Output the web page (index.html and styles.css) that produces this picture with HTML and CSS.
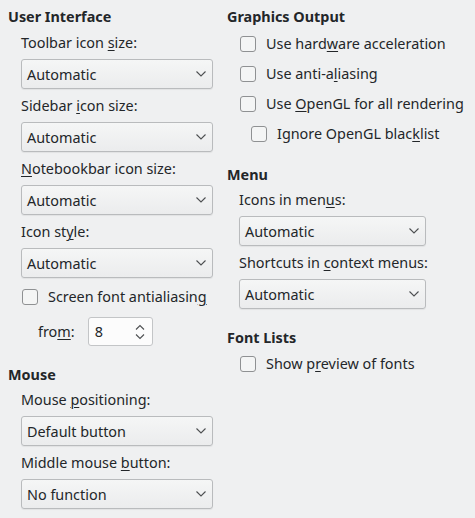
FILE: index.html
```html
<!DOCTYPE html>
<html>
<head>
<meta charset="utf-8">
<link rel="stylesheet" href="styles.css">
</head>
<body>
<div class="page">
  <div class="col col-left">
    <div class="heading">User Interface</div>
    <div class="indent">
      <div class="label">Toolbar icon <u>s</u>ize:</div>
      <div class="combo"><span>Automatic</span><svg class="chev" width="10" height="6" viewBox="0 0 10 6"><path d="M0.5 0.5 L5 5 L9.5 0.5" fill="none" stroke="#4d4f51" stroke-width="1.1"/></svg></div>
      <div class="label">Sidebar <u>i</u>con size:</div>
      <div class="combo"><span>Automatic</span><svg class="chev" width="10" height="6" viewBox="0 0 10 6"><path d="M0.5 0.5 L5 5 L9.5 0.5" fill="none" stroke="#4d4f51" stroke-width="1.1"/></svg></div>
      <div class="label"><u>N</u>otebookbar icon size:</div>
      <div class="combo"><span>Automatic</span><svg class="chev" width="10" height="6" viewBox="0 0 10 6"><path d="M0.5 0.5 L5 5 L9.5 0.5" fill="none" stroke="#4d4f51" stroke-width="1.1"/></svg></div>
      <div class="label">Icon st<u>y</u>le:</div>
      <div class="combo"><span>Automatic</span><svg class="chev" width="10" height="6" viewBox="0 0 10 6"><path d="M0.5 0.5 L5 5 L9.5 0.5" fill="none" stroke="#4d4f51" stroke-width="1.1"/></svg></div>
      <div class="check check-aa"><span class="box"></span><span>Screen font antialiasin<u>g</u></span></div>
      <div class="from-row">
        <span class="from-label">fro<u>m</u>:</span>
        <div class="spin"><span>8</span><svg class="spin-arrows" width="10" height="16" viewBox="0 0 10 16"><path d="M1 5.5 L5 1.5 L9 5.5 M1 10.5 L5 14.5 L9 10.5" fill="none" stroke="#4d4f51" stroke-width="1.1"/></svg></div>
      </div>
    </div>
    <div class="heading heading-mouse">Mouse</div>
    <div class="indent">
      <div class="label label-first">Mouse <u>p</u>ositioning:</div>
      <div class="combo"><span>Default button</span><svg class="chev" width="10" height="6" viewBox="0 0 10 6"><path d="M0.5 0.5 L5 5 L9.5 0.5" fill="none" stroke="#4d4f51" stroke-width="1.1"/></svg></div>
      <div class="label">Middle mouse <u>b</u>utton:</div>
      <div class="combo"><span>No function</span><svg class="chev" width="10" height="6" viewBox="0 0 10 6"><path d="M0.5 0.5 L5 5 L9.5 0.5" fill="none" stroke="#4d4f51" stroke-width="1.1"/></svg></div>
    </div>
  </div>
  <div class="col col-right">
    <div class="heading">Graphics Output</div>
    <div class="indent">
      <div class="check check-first"><span class="box"></span><span>Use hard<u>w</u>are acceleration</span></div>
      <div class="check"><span class="box"></span><span>Use anti-a<u>l</u>iasing</span></div>
      <div class="check"><span class="box"></span><span>Use <u>O</u>penGL for all rendering</span></div>
      <div class="check check-sub"><span class="box"></span><span>Ignore OpenGL blac<u>k</u>list</span></div>
    </div>
    <div class="heading heading-menu">Menu</div>
    <div class="indent">
      <div class="label label-first">Icons in men<u>u</u>s:</div>
      <div class="combo"><span>Automatic</span><svg class="chev" width="10" height="6" viewBox="0 0 10 6"><path d="M0.5 0.5 L5 5 L9.5 0.5" fill="none" stroke="#4d4f51" stroke-width="1.1"/></svg></div>
      <div class="label">Shortcuts in <u>c</u>ontext menus:</div>
      <div class="combo"><span>Automatic</span><svg class="chev" width="10" height="6" viewBox="0 0 10 6"><path d="M0.5 0.5 L5 5 L9.5 0.5" fill="none" stroke="#4d4f51" stroke-width="1.1"/></svg></div>
    </div>
    <div class="heading heading-fonts">Font Lists</div>
    <div class="indent">
      <div class="check check-preview"><span class="box"></span><span>Show p<u>r</u>eview of fonts</span></div>
    </div>
  </div>
</div>
</body>
</html>
```

FILE: styles.css
```css
html, body {
  margin: 0;
  padding: 0;
  background: #eff0f1;
}
body {
  font-family: "Noto Sans", "DejaVu Sans", sans-serif;
  font-size: 14.4px;
  color: #232629;
  width: 475px;
  height: 518px;
  overflow: hidden;
}
u {
  text-decoration: underline;
  text-underline-offset: 2px;
  text-decoration-thickness: 1px;
}
.page {
  display: flex;
  padding: 7px 0 0 8px;
  gap: 14px;
}
.col-left {
  width: 205px;
  display: flex;
  flex-direction: column;
}
.col-right {
  width: 240px;
  display: flex;
  flex-direction: column;
}
.heading {
  font-weight: bold;
  line-height: 20px;
  height: 20px;
  white-space: nowrap;
}
.indent {
  padding-left: 13px;
  display: flex;
  flex-direction: column;
}
.col-right .indent {
  padding-left: 12px;
}
.label {
  line-height: 20px;
  height: 20px;
  margin-top: 6px;
  margin-bottom: 6px;
  white-space: nowrap;
}
.label-first {
  margin-top: 5px;
}
.combo {
  box-sizing: border-box;
  height: 30px;
  width: 192px;
  border: 1px solid #b9bbbd;
  border-radius: 3px;
  background: linear-gradient(#f5f6f6, #ebeced);
  box-shadow: 0 1px 1px rgba(0,0,0,0.06);
  display: flex;
  align-items: center;
  justify-content: space-between;
  padding: 0 6px 0 5px;
  margin-bottom: 1px;
}
.col-right .combo {
  width: 187px;
}
.chev {
  display: block;
}
.check {
  display: flex;
  align-items: center;
  gap: 10px;
  height: 20px;
  line-height: 20px;
  margin-top: 10px;
  white-space: nowrap;
}
.col-right .check {
  padding-left: 1px;
}
.box {
  box-sizing: border-box;
  width: 16px;
  height: 16px;
  border: 1px solid #8f9193;
  border-radius: 3px;
  background: #f4f5f5;
  flex: none;
}
.check-aa {
  margin-top: 8px;
  padding-left: 1px;
}
.col-right .check-first {
  margin-top: 7px;
}
.col-right .check-sub {
  padding-left: 12px;
}
.from-row {
  display: flex;
  align-items: center;
  margin-top: 10px;
  padding-left: 17px;
  gap: 13px;
}
.spin {
  box-sizing: border-box;
  width: 65px;
  height: 29px;
  border: 1px solid #c3c5c7;
  border-radius: 3px;
  background: #fcfcfc;
  display: flex;
  align-items: center;
  justify-content: space-between;
  padding: 0 7px 0 6px;
}
.spin-arrows {
  display: block;
}
.heading-mouse {
  margin-top: 19px;
}
.heading-menu {
  margin-top: 21px;
}
.heading-fonts {
  margin-top: 18px;
}
.col-right .check-preview {
  margin-top: 6px;
}
```
